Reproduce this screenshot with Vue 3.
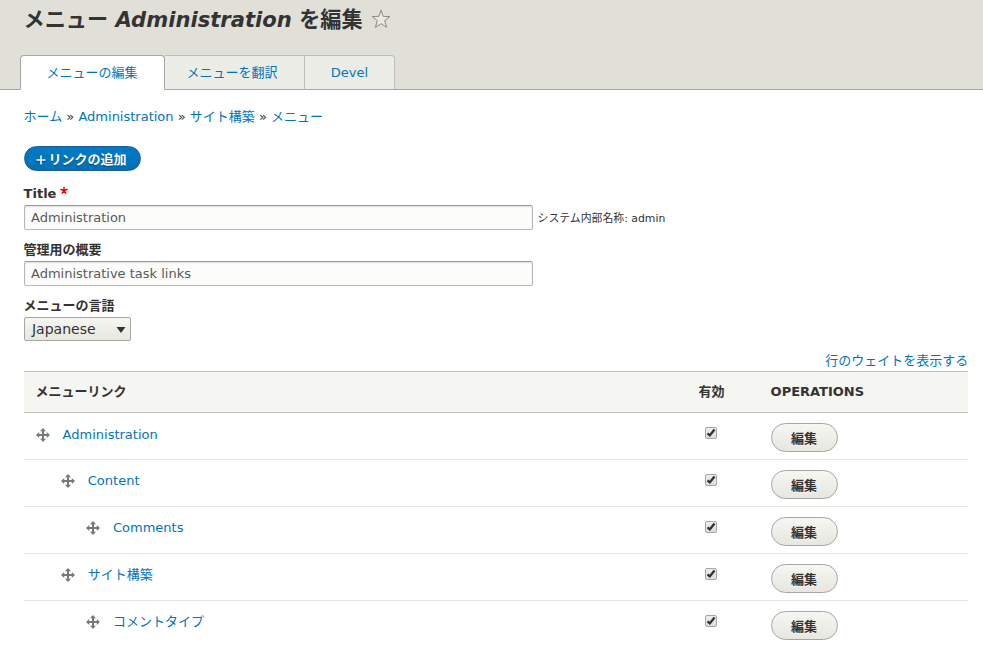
<script setup>
import { ref } from 'vue'

const tabs = [
  { label: 'メニューの編集', width: 145, active: true },
  { label: 'メニューを翻訳', width: 140 },
  { label: 'Devel', width: 90 },
]
const crumbs = ['ホーム', 'Administration', 'サイト構築', 'メニュー']
const title = ref('Administration')
const summary = ref('Administrative task links')
const rows = ref([
  { label: 'Administration', depth: 0, enabled: true },
  { label: 'Content', depth: 1, enabled: true },
  { label: 'Comments', depth: 2, enabled: true },
  { label: 'サイト構築', depth: 1, enabled: true },
  { label: 'コメントタイプ', depth: 2, enabled: true },
])
</script>

<template>
  <div class="page">
    <header class="header">
      <h1 class="title">
        <span>メニュー <em>Administration</em> を編集</span>
        <svg class="star" width="20" height="20" viewBox="0 0 20 20">
          <path d="M10 1.2 L12.2 7.4 L18.8 7.5 L13.7 11.7 L15.6 18.4 L10 14.7 L4.4 18.4 L6.3 11.7 L1.2 7.5 L7.8 7.4 Z" />
        </svg>
      </h1>
      <nav class="tabs">
        <a v-for="t in tabs" :key="t.label" class="tab" :class="{ active: t.active }" :style="{ width: t.width + 'px' }">{{ t.label }}</a>
      </nav>
    </header>

    <main class="content">
      <nav class="crumbs">
        <template v-for="(c, i) in crumbs" :key="c"><span v-if="i"> » </span><a>{{ c }}</a></template>
      </nav>

      <a class="add"><svg width="10" height="10" viewBox="0 0 10 10"><path d="M5 0.5V9.5M0.5 5H9.5" /></svg>リンクの追加</a>

      <div class="field">
        <label>Title<svg class="required" width="8" height="7" viewBox="0 0 8 7"><path d="M4 0V3.7M0.5 2.3L4 3.7L7.5 2.3M1.8 6.6L4 3.7L6.2 6.6" /></svg></label>
        <div class="line">
          <input v-model="title" type="text" class="text">
          <span class="machine">システム内部名称: admin</span>
        </div>
      </div>
      <div class="field">
        <label>管理用の概要</label>
        <input v-model="summary" type="text" class="text">
      </div>
      <div class="field">
        <label>メニューの言語</label>
        <div class="select">
          <span>Japanese</span>
          <svg width="10" height="6" viewBox="0 0 10 6"><path d="M0.5 0H9.5L5 6Z" /></svg>
        </div>
      </div>

      <div class="toggle"><a>行のウェイトを表示する</a></div>

      <div class="table">
        <div class="row head">
          <div>メニューリンク</div>
          <div class="center">有効</div>
          <div>OPERATIONS</div>
        </div>
        <div v-for="r in rows" :key="r.label" class="row body">
          <div class="link" :style="{ paddingLeft: r.depth * 25.2 + 'px' }">
            <svg class="move" width="14" height="14" viewBox="0 0 14 14">
              <path class="stem" d="M7 1.5V12.5M1.5 7H12.5" />
              <path d="M7 0L10 3.2H4ZM7 14L10 10.8H4ZM0 7L3.2 4V10ZM14 7L10.8 4V10Z" />
            </svg>
            <a>{{ r.label }}</a>
          </div>
          <div class="check">
            <button class="box" type="button" @click="r.enabled = !r.enabled">
              <svg v-if="r.enabled" width="10" height="10" viewBox="0 0 10 10"><path d="M1.5 5.4L3.8 7.4L8.5 1.6" /></svg>
            </button>
          </div>
          <div class="ops"><button class="edit" type="button">編集</button></div>
        </div>
      </div>
    </main>
  </div>
</template>

<style>
body { background: #fff; }
</style>

<style scoped>
.page {
  height: 646px;
  overflow: hidden;
  font: 13px/20px "DejaVu Sans", "Noto Sans CJK JP", sans-serif;
  color: #333;
}
.page *, .page { box-sizing: border-box; }
a { color: #0074bd; cursor: pointer; }
.header {
  height: 90px;
  background: #e0e0d8;
  border-bottom: 1px solid #a6a6a6;
  padding: 4px 20px 0;
  display: flex;
  flex-direction: column;
  justify-content: space-between;
}
.title {
  display: flex;
  gap: 8.4px;
  margin: 0;
  padding-left: 3.6px;
  font-size: 21.125px;
  line-height: 31px;
  white-space: nowrap;
}
.star { margin-top: 5px; }
.star path { fill: #e9e9e0; stroke: #8e8b78; stroke-width: 1; stroke-linejoin: round; }
.tabs { display: flex; margin-bottom: -1px; }
.tab {
  height: 35px;
  line-height: 33px;
  text-align: center;
  background: #ecede6;
  border: solid #bebfb9;
  border-width: 1px 1px 0 0;
  border-bottom: 1px solid #a6a6a6;
  padding-right: 5px;
}
.tab:last-child { border-top-right-radius: 4px; padding-right: 0; }
.tab.active {
  background: #fff;
  border: 1px solid #a6a6a6;
  border-bottom-color: #fff;
  border-radius: 4px 4px 0 0;
  padding-right: 1px;
}
.content { padding: 17px 14.7px 0 23.6px; }
.crumbs { white-space: pre; color: #333; }
.add {
  display: flex;
  align-items: center;
  gap: 3px;
  width: 117px;
  height: 25px;
  margin: 19px 0 12px;
  padding: 2px 0 0 12px;
  border: 1px solid #1e5c90;
  border-radius: 20px;
  background: linear-gradient(#007bc6, #0071b8);
  color: #fff;
  font-weight: bold;
  line-height: 21px;
  text-shadow: 0 1px rgba(0, 0, 0, 0.5);
  white-space: nowrap;
}
.add svg { margin-left: -1px; filter: drop-shadow(0 1px 0 rgba(0, 0, 0, 0.4)); }
.add path { stroke: #fff; stroke-width: 1.6; }
.field { height: 56px; }
.field label { display: flex; height: 22px; line-height: 21px; font-weight: bold; }
.required { margin: 4px 0 0 3.5px; }
.required path { fill: none; stroke: #e00; stroke-width: 1.5; }
.line { display: flex; gap: 5px; }
.text {
  display: block;
  width: 509px;
  height: 25px;
  padding: 0 6px 0 6.4px;
  border: 1px solid #b8b8b8;
  border-top-color: #999;
  border-radius: 2px;
  background: #fcfcfa;
  box-shadow: inset 0 1px 2px rgba(0, 0, 0, 0.125);
  color: #595959;
  font: inherit;
  outline: none;
}
.machine { font-size: 10.86px; line-height: 27px; white-space: nowrap; }
.select {
  display: flex;
  align-items: center;
  justify-content: space-between;
  width: 107px;
  height: 24px;
  padding: 0 4px 0 7.4px;
  border: 1px solid #a6a6a6;
  border-radius: 2px;
  background: linear-gradient(#f6f6f3, #e7e7df);
  font-size: 14px;
}
.select svg { margin-top: 1px; }
.select path { fill: #333; }
.toggle { margin-top: -1px; line-height: 22px; height: 21px; text-align: right; }
.row { display: grid; grid-template-columns: 649px 86px 1fr; padding-left: 12px; }
.head {
  height: 42px;
  line-height: 40px;
  border: solid #bfbfba;
  border-width: 1px 0;
  background: #f5f5f2;
  font-weight: bold;
}
.center { padding-left: 13.8px; }
.body { height: 47px; border-bottom: 1px solid #e6e4df; }
.link { display: flex; gap: 13px; padding-top: 11px; }
.move { margin-top: 3px; }
.head + .body .link { padding-top: 12px; }
.move path { fill: #787878; }
.move .stem { stroke: #787878; stroke-width: 2; }
.check { padding: 14px 0 0 20px; }
.box {
  display: flex;
  align-items: center;
  justify-content: center;
  width: 12px;
  height: 12px;
  padding: 0;
  border: 1px solid #a5a5a5;
  border-radius: 2px;
  background: linear-gradient(#eee, #ddd);
}
.box path { fill: none; stroke: #333; stroke-width: 2.4; }
.ops { padding-top: 10px; }
.edit {
  display: block;
  width: 67px;
  height: 29px;
  padding: 3px 0 0;
  border: 1px solid #a6a6a6;
  border-radius: 20px;
  background: linear-gradient(#f6f6f3, #e7e7df);
  color: #333;
  font: bold 13px/20px "DejaVu Sans", "Noto Sans CJK JP", sans-serif;
  text-shadow: 0 1px rgba(255, 255, 255, 0.6);
}
</style>
